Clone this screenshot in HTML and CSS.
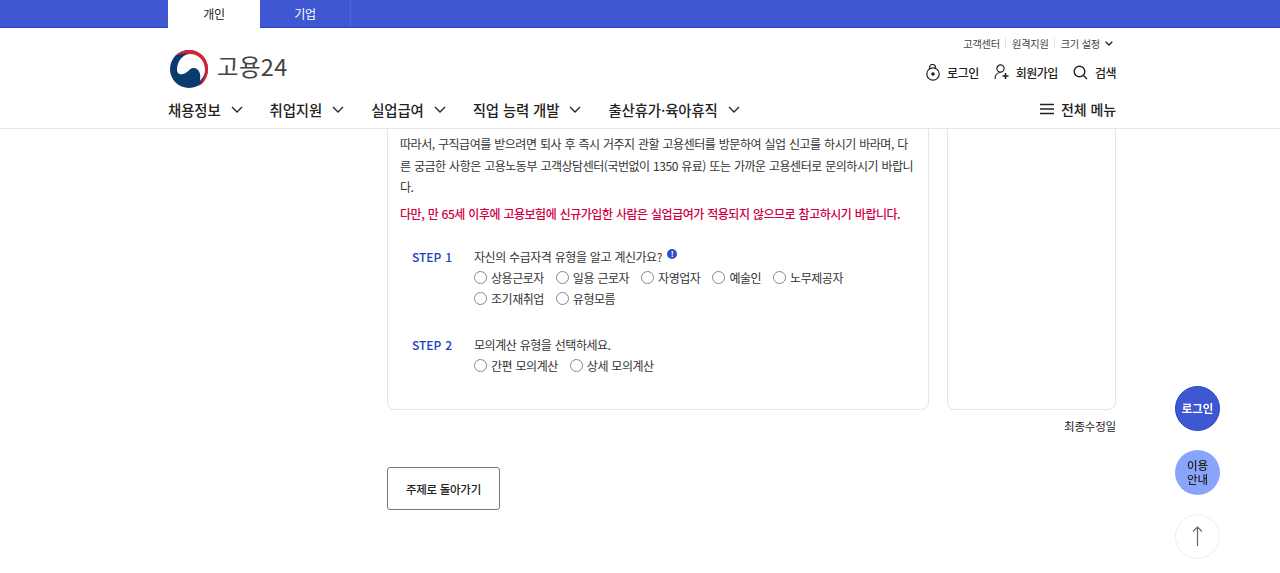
FILE: index.html
```html
<!DOCTYPE html>
<html lang="ko">
<head>
    <meta charset="UTF-8">
    <meta name="viewport" content="width=device-width, initial-scale=1.0">
    <title>고용24</title>
    <link rel="stylesheet" href="styles.css">
</head>
<body>

<!-- Top Tabs -->
<div class="top-bar">
    <div class="wrap top-tabs">
        <a class="top-tab active" href="#">개인</a>
        <a class="top-tab" href="#">기업</a>
    </div>
</div>

<!-- Header -->
<header class="header">
    <div class="wrap">
        <div class="util-row">
            <a href="#">고객센터</a>
            <span class="util-sep"></span>
            <a href="#">원격지원</a>
            <span class="util-sep"></span>
            <a href="#">크기 설정</a>
            <svg class="util-arrow" width="8" height="5" viewBox="0 0 8 5"><path d="M.7.7L4 4 7.300.7" fill="none" stroke="#222" stroke-width="1.300"/></svg>
        </div>
        <div class="logo-row">
            <a class="logo" href="#">
                <svg width="40" height="40" viewBox="0 0 40 40">
                    <circle cx="20" cy="20" r="19" fill="#0b3a6e"/>
                    <path d="M6 7C10 3 15 1 20 1c11 0 19 9 19 19 0 7-3 13-9 17 4-5 6-10 6-16C36 12 29 6 20 5 15 4 10 5 6 7z" fill="#d8232f"/>
                    <path d="M8 21C8 12 14 5 21 5c9 0 15 7 15 16 0 4-2 8-5 11 1-6 0-12-6-13-4-1-6 5-11 6-4 1-6-1-6-4z" fill="#fff"/>
                </svg>
                <span class="logo-text">고용24</span>
            </a>
            <div class="member-links">
                <a href="#">
                    <svg width="14" height="17" viewBox="0 0 14 17" fill="none" stroke="#222" stroke-width="1.200"><circle cx="7" cy="10" r="6.200"/><path d="M3.500 5V3.500a3 3 0 0 1 6 0V4.500"/><circle cx="7" cy="10" r="1.200" fill="#222"/></svg>
                    로그인
                </a>
                <a href="#">
                    <svg width="15" height="16" viewBox="0 0 15 16" fill="none" stroke="#222" stroke-width="1.200"><circle cx="6.500" cy="4.500" r="3.600"/><path d="M1 15c0-4 2.500-6.500 5.500-6.500"/><path d="M11.500 9v6M8.500 12h6" stroke-width="1.600"/></svg>
                    회원가입
                </a>
                <a href="#">
                    <svg width="15" height="15" viewBox="0 0 15 15" fill="none" stroke="#222" stroke-width="1.400"><circle cx="6.500" cy="6.500" r="5.300"/><path d="M10.500 10.500L14 14"/></svg>
                    검색
                </a>
            </div>
        </div>
        <nav class="gnb">
            <a href="#">채용정보<svg width="12" height="7" viewBox="0 0 12 7"><path d="M1 1l5 5 5-5" fill="none" stroke="#222" stroke-width="1.300"/></svg></a>
            <a href="#">취업지원<svg width="12" height="7" viewBox="0 0 12 7"><path d="M1 1l5 5 5-5" fill="none" stroke="#222" stroke-width="1.300"/></svg></a>
            <a href="#">실업급여<svg width="12" height="7" viewBox="0 0 12 7"><path d="M1 1l5 5 5-5" fill="none" stroke="#222" stroke-width="1.300"/></svg></a>
            <a href="#">직업 능력 개발<svg width="12" height="7" viewBox="0 0 12 7"><path d="M1 1l5 5 5-5" fill="none" stroke="#222" stroke-width="1.300"/></svg></a>
            <a href="#">출산휴가·육아휴직<svg width="12" height="7" viewBox="0 0 12 7"><path d="M1 1l5 5 5-5" fill="none" stroke="#222" stroke-width="1.300"/></svg></a>
            <a class="all-menu" href="#">
                <svg width="14" height="12" viewBox="0 0 14 12" fill="none" stroke="#222" stroke-width="1.600"><path d="M0 1.500h14M0 6h14M0 10.500h14"/></svg>
                전체 메뉴
            </a>
        </nav>
    </div>
</header>

<!-- Content -->
<main class="wrap content">
    <div class="card-row">
        <section class="card main-card">
            <p>따라서, 구직급여를 받으려면 퇴사 후 즉시 거주지 관할 고용센터를 방문하여 실업 신고를 하시기 바라며, 다른 궁금한 사항은 고용노동부 고객상담센터(국번없이 1350 유료) 또는 가까운 고용센터로 문의하시기 바랍니다.</p>
            <p class="notice">다만, 만 65세 이후에 고용보험에 신규가입한 사람은 실업급여가 적용되지 않으므로 참고하시기 바랍니다.</p>

            <div class="step step-first">
                <div class="step-label">STEP 1</div>
                <div class="step-body">
                    <div class="step-title">자신의 수급자격 유형을 알고 계신가요?<span class="info-dot">!</span></div>
                    <div class="radio-group">
                        <label class="radio"><span class="radio-mark"></span>상용근로자</label>
                        <label class="radio"><span class="radio-mark"></span>일용 근로자</label>
                        <label class="radio"><span class="radio-mark"></span>자영업자</label>
                        <label class="radio"><span class="radio-mark"></span>예술인</label>
                        <label class="radio"><span class="radio-mark"></span>노무제공자</label>
                        <label class="radio"><span class="radio-mark"></span>조기재취업</label>
                        <label class="radio"><span class="radio-mark"></span>유형모름</label>
                    </div>
                </div>
            </div>

            <div class="step">
                <div class="step-label">STEP 2</div>
                <div class="step-body">
                    <div class="step-title">모의계산 유형을 선택하세요.</div>
                    <div class="radio-group">
                        <label class="radio"><span class="radio-mark"></span>간편 모의계산</label>
                        <label class="radio"><span class="radio-mark"></span>상세 모의계산</label>
                    </div>
                </div>
            </div>
        </section>
        <aside class="card side-card"></aside>
    </div>
    <div class="updated">최종수정일</div>
    <a class="back-btn" href="#">주제로 돌아가기</a>
</main>

<!-- Floating Buttons -->
<div class="float-btns">
    <a class="float-btn float-login" href="#">로그인</a>
    <a class="float-btn float-guide" href="#">이용<br>안내</a>
    <a class="float-btn float-top" href="#">
        <svg width="11" height="20" viewBox="0 0 11 20" fill="none" stroke="#666" stroke-width="1.200"><path d="M5.500 20V1M1 5.500L5.500 1 10 5.500"/></svg>
    </a>
</div>

</body>
</html>
```

FILE: styles.css
```css
* {
    box-sizing: border-box;
}

html, body {
    height: 100%;
}

body {
    margin: 0;
    overflow: hidden;
    font-family: "Noto Sans CJK KR", "Noto Sans", sans-serif;
    font-size: 12px;
    color: #222;
    background: #fff;
}

a {
    color: inherit;
    text-decoration: none;
}

.wrap {
    width: 948px;
    margin-left: 168px;
}

/* Top Tabs */
.top-bar {
    height: 28px;
    background: #3f57d3;
    border-bottom: 1px solid #2547c4;
}

.top-tabs {
    display: flex;
    height: 28px;
}

.top-tab {
    width: 91px;
    height: 27px;
    line-height: 27px;
    text-align: center;
    font-size: 12px;
    letter-spacing: -0.300px;
    color: #fff;
    border-right: 1px solid #5067d8;
}

.top-tab.active {
    width: 92px;
    height: 28px;
    background: #fff;
    color: #222;
    border-right: 0;
}

/* Header */
.header {
    height: 101px;
    padding-top: 8px;
    border-bottom: 1px solid #e8e8e8;
}

.util-row {
    display: flex;
    justify-content: flex-end;
    align-items: center;
    height: 14px;
    font-size: 10.200px;
    letter-spacing: -0.200px;
    color: #444;
}

.util-sep {
    width: 1px;
    height: 10px;
    margin: 0 5.500px;
    background: #e4e4e4;
}

.util-arrow {
    margin: 0 3px 0 5px;
}

.logo-row {
    display: flex;
    justify-content: space-between;
    align-items: center;
    height: 48px;
    margin-top: -2px;
}

.logo {
    display: flex;
    align-items: center;
    gap: 8px;
    margin: 0 0 6px 1px;
}

.logo-text {
    padding-bottom: 4px;
    font-size: 23.500px;
    line-height: 1;
    color: #444;
    letter-spacing: 0.300px;
}

.member-links {
    display: flex;
    align-items: center;
    gap: 15px;
    font-size: 12px;
    font-weight: 500;
    letter-spacing: -0.500px;
}

.member-links a {
    display: flex;
    align-items: center;
    gap: 7px;
}

.gnb {
    display: flex;
    align-items: center;
    gap: 27px;
    height: 24px;
    margin-top: 1px;
    font-size: 14.400px;
    font-weight: 500;
    letter-spacing: -0.100px;
}

.gnb a {
    display: flex;
    align-items: center;
    gap: 10px;
}

.gnb .all-menu {
    margin-left: auto;
    gap: 7px;
    font-size: 14px;
}

/* Content */
.content {
    position: relative;
    padding-left: 219px;
}

.card-row {
    display: flex;
    gap: 18px;
    height: 281px;
}

.card {
    border: 1px solid #e6e6e6;
    border-top: 0;
    border-radius: 0 0 8px 8px;
}

.main-card {
    width: 542px;
    padding: 4px 12px 0;
    font-size: 12px;
    line-height: 21.600px;
    letter-spacing: -0.470px;
    word-spacing: 0.500px;
    color: #333;
}

.side-card {
    width: 169px;
}

.main-card p {
    margin: 0;
}

.main-card .notice {
    margin-top: 5px;
    color: #d0003f;
    font-weight: 500;
}

.step {
    display: flex;
    margin-top: 25px;
}

.step-first {
    margin-top: 22px;
}

.step-label {
    width: 74px;
    padding-left: 12px;
    color: #1c3fc0;
    font-weight: 500;
    letter-spacing: 0;
}

.step-title {
    display: flex;
    align-items: flex-start;
    height: 21px;
}

.info-dot {
    width: 10px;
    height: 10px;
    margin: 3px 0 0 5px;
    border-radius: 50%;
    background: #2f4fc9;
    color: #fff;
    font-size: 8px;
    line-height: 10px;
    text-align: center;
    font-weight: 700;
}

.radio-group {
    display: flex;
    flex-wrap: wrap;
    column-gap: 12px;
    width: 400px;
}

.radio {
    display: flex;
    align-items: center;
    gap: 4px;
    height: 21px;
}

.radio-mark {
    width: 13px;
    height: 13px;
    border: 1px solid #888;
    border-radius: 50%;
    background: #fff;
}

.updated {
    margin-top: 7px;
    height: 18px;
    text-align: right;
    line-height: 18px;
    font-size: 11.500px;
    letter-spacing: -0.200px;
}

.back-btn {
    display: flex;
    align-items: center;
    justify-content: center;
    width: 113px;
    height: 43px;
    margin-top: 32px;
    border: 1px solid #777;
    border-radius: 3px;
    font-size: 11.500px;
    font-weight: 500;
    letter-spacing: -0.300px;
}

/* Floating Buttons */
.float-btns {
    position: fixed;
    top: 386px;
    left: 1175px;
    display: flex;
    flex-direction: column;
    gap: 19px;
}

.float-btn {
    display: flex;
    align-items: center;
    justify-content: center;
    width: 45px;
    height: 45px;
    padding-bottom: 2px;
    border-radius: 50%;
    text-align: center;
    font-size: 11.500px;
    line-height: 14px;
    font-weight: 500;
}

.float-login {
    background: #3f57d3;
    border: 1px solid #2547c4;
    color: #fff;
    font-weight: 700;
}

.float-guide {
    background: #88a5fb;
    color: #222;
}

.float-top {
    background: #fff;
    border: 1px solid #eee;
}
```
